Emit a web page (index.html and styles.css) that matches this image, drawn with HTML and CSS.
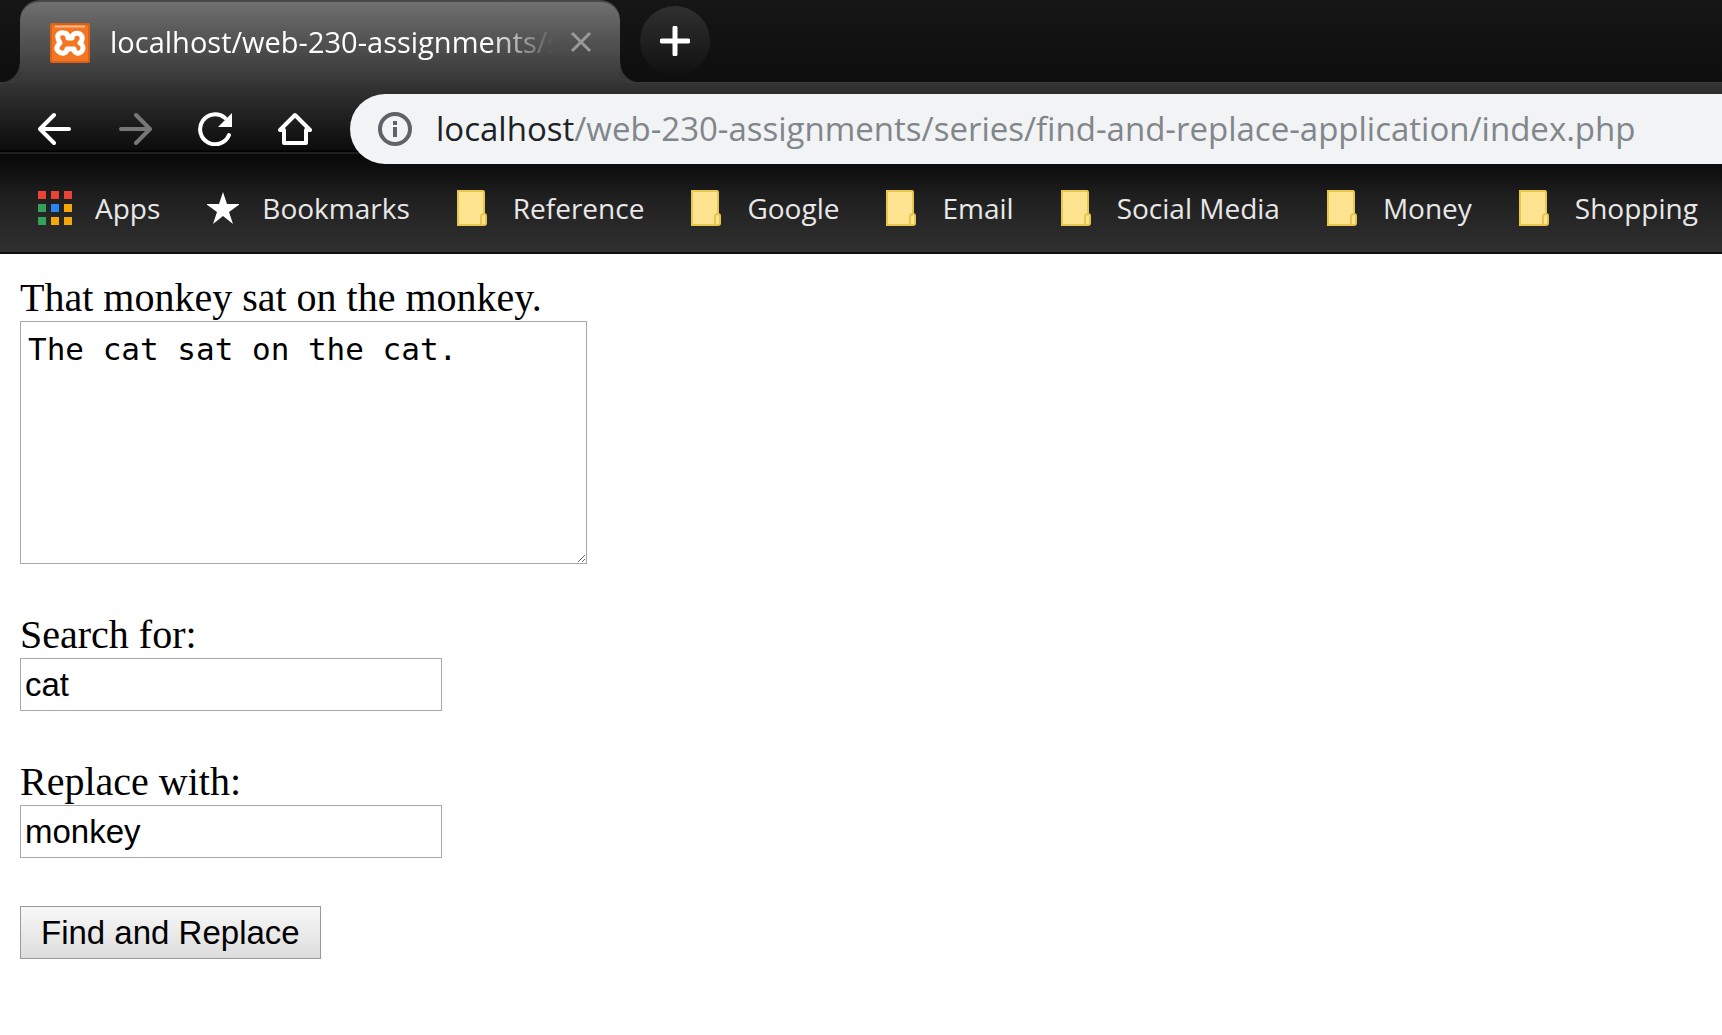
FILE: index.html
```html
<!DOCTYPE html>
<html lang="en">
<head>
<meta charset="utf-8">
<title>localhost/web-230-assignments/series/find-and-replace-application/index.php</title>
<link rel="stylesheet" href="styles.css">
</head>
<body>
<header class="browser">
  <div class="tab-strip">
    <div class="tab">
      <svg class="favicon" viewBox="0 0 40 40" aria-hidden="true">
        <rect width="40" height="40" rx="3" fill="#f37623"/>
        <rect x="1" y="1" width="38" height="38" rx="2" fill="none" stroke="#d9611a" stroke-width="2"/>
        <path d="M5 3.500h30" stroke="#fbb98a" stroke-width="2"/>
        <path d="M14 10C9 9 7 12 8 15C8 18 10 19 10 20C7 23 6 26 8 28C12 32 17 30 17 26H24C24 30 29 32 32 28C34 25 33 22 30 20C33 17 33 13 30 11C26 9 22 11 22 15H18C18 12 17 10 14 10Z" fill="none" stroke="#fff" stroke-width="5" stroke-linejoin="round"/>
        <circle cx="13" cy="15" r="2" fill="#f37623"/>
      </svg>
      <span class="tab-title">localhost/web-230-assignments/s</span>
      <button class="tab-close" type="button" aria-label="Close tab">
        <svg viewBox="0 0 22 22" width="22" height="22"><path d="M2 2L20 20M20 2L2 20" stroke="#9a9a9a" stroke-width="3"/></svg>
      </button>
    </div>
    <button class="new-tab" type="button" aria-label="New tab">
      <svg viewBox="0 0 30 30" width="30" height="30"><path d="M15 2V28M2 15H28" stroke="#fff" stroke-width="5" stroke-linecap="round"/></svg>
    </button>
  </div>
  <nav class="toolbar" aria-label="Navigation">
    <button class="tool" type="button" aria-label="Back">
      <svg viewBox="0 0 34 34"><path d="M31 17H3M16 3L2 17L16 31" fill="none" stroke="#fff" stroke-width="4" stroke-linecap="round" stroke-linejoin="round"/></svg>
    </button>
    <button class="tool" type="button" aria-label="Forward">
      <svg viewBox="0 0 34 34"><path d="M3 17H31M18 3L32 17L18 31" fill="none" stroke="#777" stroke-width="4" stroke-linecap="round" stroke-linejoin="round"/></svg>
    </button>
    <button class="tool" type="button" aria-label="Reload">
      <svg viewBox="0 0 34 34"><path d="M31 23A15 15 0 1 1 27 6" fill="none" stroke="#fff" stroke-width="4" stroke-linecap="round"/><path d="M34 1V15H20Z" fill="#fff"/></svg>
    </button>
    <button class="tool" type="button" aria-label="Home">
      <svg viewBox="0 0 34 34"><path d="M2 18L17 3L32 18H28V31H6V18Z" fill="none" stroke="#fff" stroke-width="4" stroke-linejoin="round"/></svg>
    </button>
    <div class="omnibox">
      <svg viewBox="0 0 34 34" width="34" height="34" aria-hidden="true"><circle cx="17" cy="17" r="15" fill="none" stroke="#5f6368" stroke-width="4"/><path d="M15 9h4v4h-4zM15 15h4v10h-4z" fill="#5f6368"/></svg>
      <a class="url" href="#"><span class="host">localhost</span>/web-230-assignments/series/find-and-replace-application/index.php</a>
    </div>
  </nav>
  <nav class="bookmarks" aria-label="Bookmarks">
    <a class="bookmark" href="#">
      <svg viewBox="0 0 34 36" width="34" height="36" aria-hidden="true"><path d="M0 1h8v8H0zM13 1h8v8h-8zM26 1h8v8h-8z" fill="#ea4335"/><path d="M0 14h8v8H0zM0 27h8v8H0z" fill="#34a05a"/><path d="M13 14h8v8h-8z" fill="#2a84f2"/><path d="M26 14h8v8h-8zM13 27h8v8h-8zM26 27h8v8h-8z" fill="#f5a70a"/></svg>Apps</a>
    <a class="bookmark" href="#">
      <svg viewBox="0 0 32 36" width="32" height="36" aria-hidden="true"><path d="M16 2L20 14H33L22 22L26 34L16 26L6 34L10 22L-1 14H12Z" fill="#fff"/></svg>Bookmarks</a>
    <a class="bookmark bookmark-folder" href="#"><svg class="folder" viewBox="0 0 30 36" aria-hidden="true"><use href="#folder"/></svg>Reference</a>
    <a class="bookmark bookmark-folder" href="#"><svg class="folder" viewBox="0 0 30 36" aria-hidden="true"><use href="#folder"/></svg>Google</a>
    <a class="bookmark bookmark-folder" href="#"><svg class="folder" viewBox="0 0 30 36" aria-hidden="true"><use href="#folder"/></svg>Email</a>
    <a class="bookmark bookmark-folder" href="#"><svg class="folder" viewBox="0 0 30 36" aria-hidden="true"><use href="#folder"/></svg>Social Media</a>
    <a class="bookmark bookmark-folder" href="#"><svg class="folder" viewBox="0 0 30 36" aria-hidden="true"><use href="#folder"/></svg>Money</a>
    <a class="bookmark bookmark-folder" href="#"><svg class="folder" viewBox="0 0 30 36" aria-hidden="true"><use href="#folder"/></svg>Shopping</a>
  </nav>
  <svg class="symbols" width="0" height="0" aria-hidden="true">
    <symbol id="folder" viewBox="0 0 30 36">
      <path d="M1 1H26Q27 1 27 3V24Q29 24 29 26V33Q29 35 27 35H1Z" fill="#fee391" stroke="#e8c74e" stroke-width="2"/>
      <path d="M27 24Q24 24 24 27V34" fill="none" stroke="#e8c74e" stroke-width="2"/>
    </symbol>
  </svg>
</header>
<main class="page">
  <form class="form" action="#" method="post">
    <div class="field">
      <label for="text">That monkey sat on the monkey.</label>
      <textarea id="text" class="text-area">The cat sat on the cat.</textarea>
    </div>
    <div class="field">
      <label for="search">Search for:</label>
      <input id="search" class="text-input" type="text" value="cat">
    </div>
    <div class="field">
      <label for="replace">Replace with:</label>
      <input id="replace" class="text-input" type="text" value="monkey">
    </div>
    <button class="submit" type="submit">Find and Replace</button>
  </form>
</main>
</body>
</html>
```
FILE: styles.css
```css
* { box-sizing: border-box; }

body {
  margin: 0;
  background: #fff;
  color: #000;
  font-family: "Liberation Serif", "Times New Roman", serif;
  font-size: 40px;
  line-height: 46px;
}

button {
  border: 0;
  padding: 0;
  background: none;
}

svg { display: block; flex: none; }

/* Browser window */
.browser {
  font-family: "Open Sans", "Segoe UI", sans-serif;
  overflow: hidden;
}

.tab-strip {
  display: flex;
  height: 83px;
  padding-left: 20px;
  background: linear-gradient(#161616, #0e0e0e);
  box-shadow: inset 0 -1px #3c3c3c;
}

.tab {
  position: relative;
  display: flex;
  align-items: center;
  width: 600px;
  padding: 0 28px 0 30px;
  border-radius: 20px 20px 0 0;
  border-top: 2px solid #484848;
  background: linear-gradient(#707070, #575757 40%, #363636);
}

.tab::before,
.tab::after {
  content: "";
  position: absolute;
  bottom: 0;
  width: 20px;
  height: 20px;
}

.tab::before {
  left: -20px;
  background: radial-gradient(circle at 0 0, transparent 19px, #383838 20px);
}

.tab::after {
  right: -20px;
  background: radial-gradient(circle at 100% 0, transparent 19px, #383838 20px);
}

.favicon { width: 40px; height: 40px; }

.tab-title {
  flex: 1;
  margin: 0 0 2px 20px;
  overflow: hidden;
  white-space: nowrap;
  color: #fff;
  font-size: 29px;
  line-height: 40px;
  -webkit-mask-image: linear-gradient(90deg, #000 85%, transparent);
  mask-image: linear-gradient(90deg, #000 85%, transparent);
}

.tab-close { margin: 0 0 2px 16px; }

.new-tab {
  display: grid;
  place-items: center;
  width: 70px;
  height: 70px;
  margin: 6px 0 0 20px;
  border-radius: 50%;
  background: linear-gradient(#303030, #101010);
}

.toolbar {
  display: flex;
  align-items: center;
  height: 81px;
  padding: 11px 0 0 38px;
  background: linear-gradient(#343434, #0c0c0c 67px, #000 68px, #000 69px, #202020 69px, #202020 71px, #0a0a0a 71px);
}

.tool {
  flex: none;
  width: 34px;
  height: 34px;
  margin-right: 46px;
}

.tool:nth-of-type(4) { margin-right: 38px; }

.omnibox {
  flex: 1;
  display: flex;
  align-items: center;
  gap: 24px;
  height: 70px;
  padding-left: 28px;
  border-radius: 35px 0 0 35px;
  background: #f1f3f4;
}

.url {
  color: #80868b;
  font-size: 33px;
  line-height: 46px;
  white-space: nowrap;
  text-decoration: none;
}

.host { color: #202124; }

.bookmarks {
  display: flex;
  align-items: center;
  gap: 47px;
  height: 90px;
  padding-left: 38px;
  border-bottom: 2px solid #111;
  background: linear-gradient(#0c0c0c, #202020 40%, #303030);
}

.bookmark {
  display: flex;
  align-items: center;
  gap: 23px;
  color: #e8e8e8;
  font-size: 28px;
  line-height: 40px;
  white-space: nowrap;
  text-decoration: none;
}

.bookmark-folder { gap: 26px; }

.folder { width: 30px; height: 36px; }

.symbols { position: absolute; }

/* Page content */
.page { padding: 21px 20px; }

.form {
  display: flex;
  flex-direction: column;
  align-items: flex-start;
  gap: 48px;
}

.field {
  display: flex;
  flex-direction: column;
  align-items: flex-start;
}

.text-area,
.text-input,
.submit {
  border: 1px solid #a9a9a9;
  color: #000;
}

.text-area {
  width: 567px;
  height: 243px;
  padding: 8px 7px;
  font-family: "DejaVu Sans Mono", monospace;
  font-size: 31px;
  line-height: 38px;
}

.text-input {
  width: 422px;
  height: 53px;
  padding: 2px 4px;
  font-family: "Liberation Sans", Arial, sans-serif;
  font-size: 33px;
}

.submit {
  height: 53px;
  padding: 0 20px;
  border-color: #999;
  background: linear-gradient(#f8f8f8, #ddd);
  font-family: "Liberation Sans", Arial, sans-serif;
  font-size: 33px;
}
```
